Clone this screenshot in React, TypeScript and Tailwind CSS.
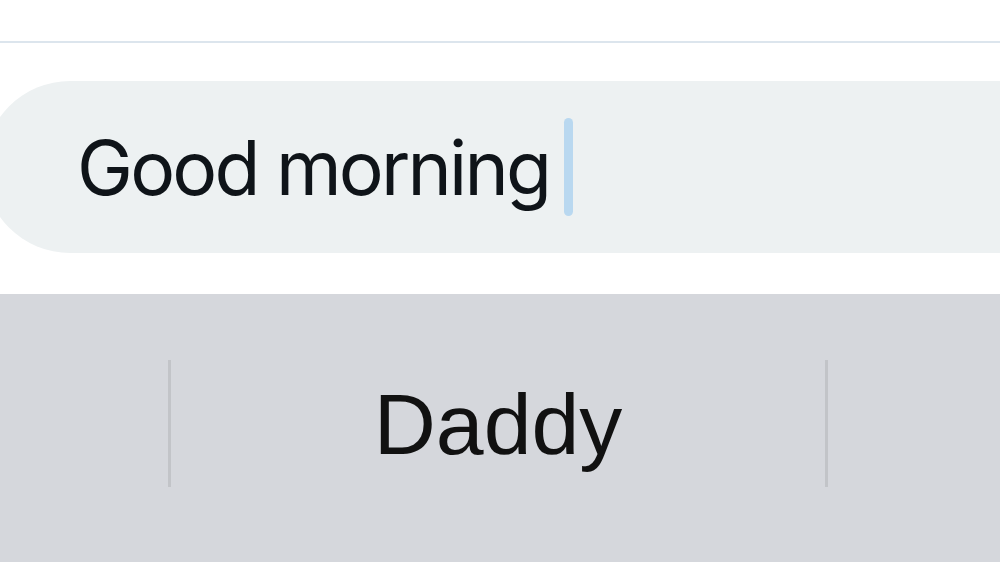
export default function App() {
  return (
    <div className="w-[1000px] h-[562px] overflow-hidden bg-white flex flex-col" style={{ fontFamily: "Inter, 'Noto Sans', sans-serif" }}>
      <div className="h-[41px] shrink-0 bg-white" />
      <div className="h-[2px] shrink-0 bg-[#dce5ed]" />
      <div className="h-[38px] shrink-0" />
      <div className="h-[172px] shrink-0 ml-[-16px] w-[1100px] rounded-l-full bg-[#edf1f2] flex items-center pl-[93px]">
        <span className="text-[75px] leading-none text-[#0f1419] tracking-[-2.8px]">Good morning</span>
        <div className="ml-[15px] w-[9px] h-[98px] rounded-full bg-[#b9d8f0]" />
      </div>
      <div className="h-[41px] shrink-0" />
      <div className="flex-1 bg-[#d5d7dc] flex items-start pt-[66px]">
        <div className="w-[168px]" />
        <div className="w-[3px] h-[127px] bg-[#c2c4c8]" />
        <div className="w-[654px] h-[127px] flex items-center justify-center">
          <span className="text-[86px] leading-none text-[#111]" style={{ fontFamily: "'Liberation Sans', Arial, sans-serif" }}>Daddy</span>
        </div>
        <div className="w-[3px] h-[127px] bg-[#c2c4c8]" />
      </div>
    </div>
  );
}
